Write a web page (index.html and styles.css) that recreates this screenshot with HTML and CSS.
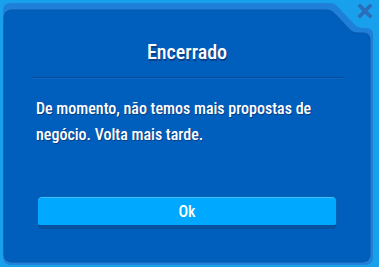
FILE: index.html
```html
<!DOCTYPE html>
<html lang="pt">
<head>
<meta charset="utf-8">
<title>Encerrado</title>
<link rel="stylesheet" href="styles.css">
</head>
<body>
<div class="dialog">
  <svg class="frame" viewBox="0 0 379 267" width="379" height="267" aria-hidden="true">
    <rect x="0" y="0" width="379" height="267" fill="#18a0ec"/>
    <path d="M3,11 Q3,3 11,3 L330,3 Q334,3 337,6 L354,24 Q358,28 363,28 L366,28 Q373,28 373,35 L373,257 Q373,265 365,265 L11,265 Q3,265 3,257 Z" fill="#1e80d8"/>
    <path d="M4,18 Q4,10 12,10 L327,10 Q331,10 334,13 L350,30 Q353,33 357,33 L363,33 Q370,33 370,40 L370,254 Q370,262 362,262 L12,262 Q4,262 4,254 Z" fill="#005ebc" stroke="#0b56aa" stroke-width="1"/>
  </svg>
  <button class="close" type="button" aria-label="Fechar">
    <svg viewBox="0 0 16 16" width="16" height="16">
      <path d="M3,3 L13,13 M13,3 L3,13" stroke="#2c6cb8" stroke-width="3.6" stroke-linecap="square"/>
    </svg>
  </button>
  <div class="content">
    <h1 class="title">Encerrado</h1>
    <div class="divider"></div>
    <p class="message">De momento, não temos mais propostas de<br>negócio. Volta mais tarde.</p>
    <button class="ok" type="button">Ok</button>
  </div>
</div>
</body>
</html>
```
FILE: styles.css
```css
html, body {
  margin: 0;
  padding: 0;
  background: #18a0ec;
}

.dialog {
  position: relative;
  width: 379px;
  height: 267px;
  overflow: hidden;
  font-family: "Roboto Condensed", "Open Sans", "DejaVu Sans Condensed", sans-serif;
  font-stretch: 75%;
  color: #ffffff;
}

.frame {
  position: absolute;
  left: 0;
  top: 0;
  z-index: 0;
  display: block;
}

.close {
  position: absolute;
  left: 357px;
  top: 3px;
  width: 16px;
  height: 16px;
  padding: 0;
  border: 0;
  background: none;
  z-index: 2;
}

.close svg {
  display: block;
}

.content {
  position: relative;
  z-index: 1;
  display: flex;
  flex-direction: column;
  padding: 39px 36px 0 31px;
}

.title {
  margin: 0;
  font-size: 20px;
  line-height: 26px;
  font-weight: 500;
  text-align: center;
  text-shadow: 1px 2px 0 #0a3f86;
}

.divider {
  margin-top: 12px;
  height: 1px;
  background: #0a4a98;
  box-shadow: 0 1px 0 #0d68c6;
}

.message {
  margin: 18px 0 0 5px;
  font-size: 16px;
  line-height: 26px;
  font-weight: 500;
  white-space: nowrap;
  text-shadow: 1px 1px 0 #0a3f86;
}

.ok {
  margin: 48px 6px 0 6px;
  height: 33px;
  box-sizing: border-box;
  border: 1px solid #0a62b4;
  border-bottom: 4px solid #07519e;
  border-radius: 5px;
  background: #00a8ff;
  box-shadow: inset 0 1px 0 #3cc0ff;
  color: #ffffff;
  font-family: inherit;
  font-stretch: inherit;
  font-size: 16px;
  font-weight: 500;
  line-height: 27px;
  padding: 0;
}
```
